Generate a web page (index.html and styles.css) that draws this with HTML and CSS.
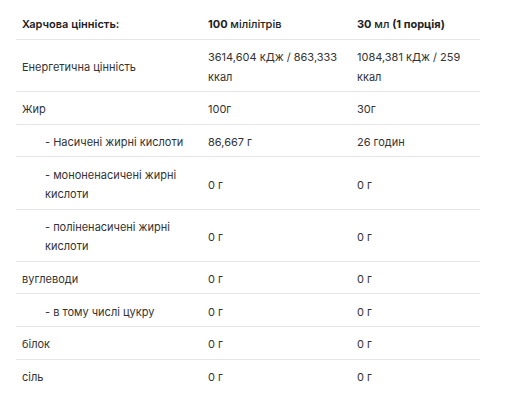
FILE: index.html
```html
<!DOCTYPE html>
<html lang="uk">
<head>
<meta charset="utf-8">
<link rel="stylesheet" href="styles.css">
</head>
<body>
<table class="nutri">
  <colgroup>
    <col class="c1"><col class="c2"><col class="c3">
  </colgroup>
  <thead>
    <tr>
      <th>Харчова цінність:</th>
      <th><b>100</b> <span class="med">мілілітрів</span></th>
      <th><b>30</b> <span class="med">мл</span> <b>(1 порція)</b></th>
    </tr>
  </thead>
  <tbody>
    <tr><td>Енергетична цінність</td><td>3614,604 кДж / 863,333 ккал</td><td>1084,381 кДж / 259 ккал</td></tr>
    <tr><td>Жир</td><td>100г</td><td>30г</td></tr>
    <tr><td class="sub">- Насичені жирні кислоти</td><td>86,667 г</td><td>26 годин</td></tr>
    <tr><td class="sub">- мононенасичені жирні кислоти</td><td>0 г</td><td>0 г</td></tr>
    <tr><td class="sub">- поліненасичені жирні кислоти</td><td>0 г</td><td>0 г</td></tr>
    <tr><td>вуглеводи</td><td>0 г</td><td>0 г</td></tr>
    <tr><td class="sub">- в тому числі цукру</td><td>0 г</td><td>0 г</td></tr>
    <tr><td>білок</td><td>0 г</td><td>0 г</td></tr>
    <tr class="last"><td>сіль</td><td>0 г</td><td>0 г</td></tr>
  </tbody>
</table>
</body>
</html>
```

FILE: styles.css
```css
html, body {
  margin: 0;
  padding: 0;
  background: #ffffff;
}
body {
  padding: 7px 25px 0 16px;
  font-family: Inter, "Noto Sans", sans-serif;
  font-size: 11px;
  color: #333333;
}
.nutri {
  width: 464px;
  border-collapse: collapse;
  table-layout: fixed;
}
.c1 { width: 186px; }
.c2 { width: 149px; }
.c3 { width: 129px; }
.nutri th,
.nutri td {
  text-align: left;
  vertical-align: middle;
  padding: 8.4px 6px 3.9px;
  line-height: 19.4px;
  border-bottom: 1px solid #e4e6ea;
}
.nutri th {
  color: #222222;
  font-weight: 600;
  line-height: 20px;
  padding: 7px 6px 5px;
}
.nutri th b { font-weight: 700; }
.nutri th .med { font-weight: 500; }
.nutri td.sub {
  padding-left: 29px;
}
.nutri tr.last td {
  border-bottom: none;
}
```
